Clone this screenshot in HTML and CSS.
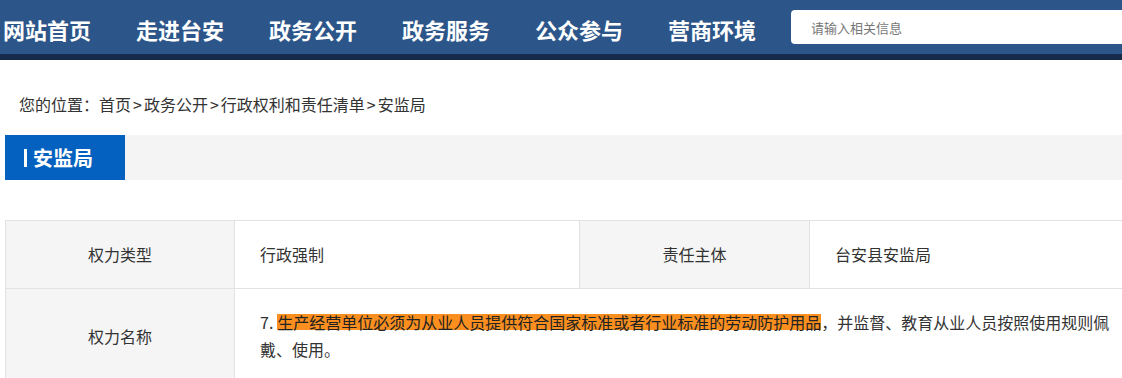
FILE: index.html
```html
<!DOCTYPE html>
<html lang="zh-CN">
<head>
    <meta charset="UTF-8">
    <meta name="viewport" content="width=device-width, initial-scale=1.0">
    <title>安监局 - 行政权利和责任清单</title>
    <link rel="stylesheet" href="styles.css">
</head>
<body>
    <div class="header">
        <ul class="nav">
            <li><a href="#">网站首页</a></li>
            <li><a href="#">走进台安</a></li>
            <li><a href="#">政务公开</a></li>
            <li><a href="#">政务服务</a></li>
            <li><a href="#">公众参与</a></li>
            <li><a href="#">营商环境</a></li>
        </ul>
        <div class="search">
            <input type="text" placeholder="请输入相关信息">
        </div>
    </div>
    <div class="header-line"></div>

    <div class="main">
        <div class="crumb">您的位置：<a href="#">首页</a><span class="sep">&gt;</span><a href="#">政务公开</a><span class="sep">&gt;</span><a href="#">行政权利和责任清单</a><span class="sep">&gt;</span><a href="#">安监局</a></div>

        <div class="title-bar">
            <div class="title"><span class="title-mark"></span>安监局</div>
        </div>

        <table class="list">
            <tr>
                <th class="first">权力类型</th>
                <td>行政强制</td>
                <th>责任主体</th>
                <td>台安县安监局</td>
            </tr>
            <tr>
                <th class="first">权力名称</th>
                <td colspan="3"><span class="num">7.</span><span class="mark">生产经营单位必须为从业人员提供符合国家标准或者行业标准的劳动防护用品</span>，并监督、教育从业人员按照使用规则佩戴、使用。</td>
            </tr>
        </table>
    </div>
</body>
</html>
```

FILE: styles.css
```css
/* 基本 */
body {
    margin: 0;
    font-family: "Noto Sans CJK SC", "Liberation Sans", sans-serif;
    color: #333;
    background: #fff;
    overflow: hidden;
}

a {
    color: inherit;
    text-decoration: none;
}

/* 顶部导航 */
.header {
    display: flex;
    align-items: center;
    height: 54px;
    background-color: #2c5689;
    padding-left: 3px;
    width: 1300px;
}

.header-line {
    height: 6px;
    background-color: #162a4a;
    width: 1300px;
}

.nav {
    display: flex;
    gap: 45px;
    list-style: none;
    margin: 0;
    padding: 4px 0 0;
}

.nav a {
    display: block;
    color: #fff;
    font-size: 22px;
    font-weight: bold;
    line-height: 30px;
}

.search {
    margin-left: 35px;
}

.search input {
    width: 400px;
    height: 34px;
    box-sizing: border-box;
    border: none;
    border-radius: 4px;
    padding: 0 20px;
    font-family: inherit;
    font-size: 13px;
    outline: none;
}

.search input::placeholder {
    color: #777;
}

/* 内容 */
.main {
    padding-left: 5px;
}

.crumb {
    padding: 31px 0 17px 14px;
    font-size: 16px;
    line-height: 27px;
    color: #333;
}

.crumb .sep {
    margin: 0 2px;
}

.title-bar {
    display: flex;
    height: 45px;
    background-color: #f4f4f4;
}

.title {
    display: flex;
    align-items: center;
    width: 101px;
    padding-left: 19px;
    background-color: #0561c0;
    color: #fff;
    font-size: 20px;
    font-weight: bold;
}

.title-mark {
    width: 3px;
    height: 18px;
    background-color: #fff;
    margin-right: 6px;
}

.list {
    margin-top: 40px;
    width: 1131px;
    border-collapse: collapse;
    font-size: 16px;
    line-height: 27px;
}

.list th, .list td {
    border: 1px solid #e2e2e2;
    padding: 20px 25px;
    text-align: left;
    vertical-align: middle;
}

.list th {
    width: 179px;
    background-color: #f5f5f5;
    font-weight: normal;
    text-align: center;
}

.list th.first {
    width: 178px;
}

.list tr:first-child td:nth-child(2) {
    width: 294px;
}

.num {
    margin-right: 4px;
}

.mark {
    background: linear-gradient(#fa8f1f, #fa8f1f) 0 4px / 100% 16px no-repeat;
    color: #222;
}
```
